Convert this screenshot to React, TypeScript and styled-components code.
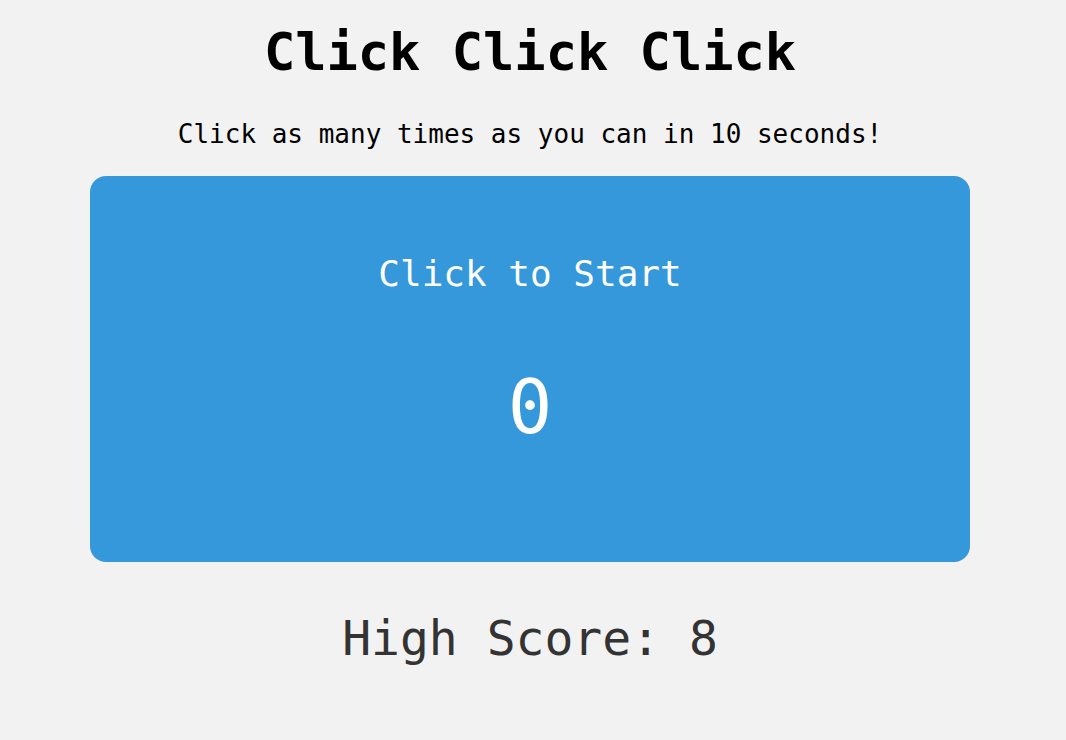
import styled, { createGlobalStyle } from "styled-components";

const GlobalStyle = createGlobalStyle`
  html, body {
    margin: 0;
    padding: 0;
    background: #f2f2f2;
  }
  body {
    font-family: "DejaVu Sans Mono", "Liberation Mono", monospace;
  }
`;

const App = () => {
  return (
    <Page>
      <GlobalStyle />
      <Title>Click Click Click</Title>
      <Subtitle>Click as many times as you can in 10 seconds!</Subtitle>
      <ClickArea type="button">
        <Status>Click to Start</Status>
        <Count>0</Count>
      </ClickArea>
      <HighScore>High Score: 8</HighScore>
    </Page>
  );
};

export default App;

const Page = styled.div`
  width: 1060px;
  display: flex;
  flex-direction: column;
  align-items: center;
  padding-top: 22px;
  text-align: center;
`;

const Title = styled.h1`
  margin: 0;
  font-size: 52px;
  font-weight: 700;
  color: #000;
`;

const Subtitle = styled.p`
  margin: 37px 0 27px;
  font-size: 26px;
  color: #000;
  font-feature-settings: "zero" 1;
`;

const ClickArea = styled.button`
  width: 880px;
  height: 386px;
  box-sizing: border-box;
  border: none;
  border-radius: 16px;
  background: #3498db;
  color: #fff;
  font-family: inherit;
  display: flex;
  flex-direction: column;
  align-items: center;
  justify-content: flex-start;
  padding: 77px 0 0;
  gap: 70px;
  cursor: pointer;
`;

const Status = styled.div`
  font-size: 36px;
`;

const Count = styled.div`
  font-size: 74px;
  font-feature-settings: "zero" 1;
`;

const HighScore = styled.div`
  margin-top: 48px;
  font-size: 48px;
  color: #333;
`;
